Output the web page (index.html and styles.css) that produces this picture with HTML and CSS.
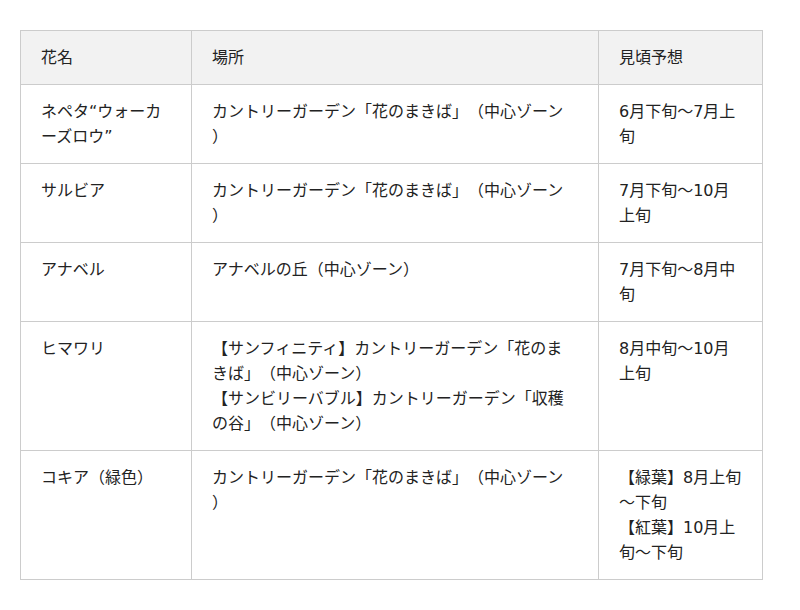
FILE: index.html
```html
<!DOCTYPE html>
<html lang="ja">
<head>
<meta charset="utf-8">
<link rel="stylesheet" href="styles.css">
</head>
<body>
<table class="bloom">
  <colgroup>
    <col class="c-name">
    <col class="c-place">
    <col class="c-season">
  </colgroup>
  <thead>
    <tr><th>花名</th><th>場所</th><th>見頃予想</th></tr>
  </thead>
  <tbody>
    <tr><td>ネペタ“ウォーカーズロウ”</td><td>カントリーガーデン「花のまきば」（中心ゾーン）</td><td>6月下旬～7月上旬</td></tr>
    <tr><td>サルビア</td><td>カントリーガーデン「花のまきば」（中心ゾーン）</td><td>7月下旬～10月上旬</td></tr>
    <tr><td>アナベル</td><td>アナベルの丘（中心ゾーン）</td><td>7月下旬～8月中旬</td></tr>
    <tr><td>ヒマワリ</td><td>【サンフィニティ】カントリーガーデン「花のまきば」（中心ゾーン）<br>【サンビリーバブル】カントリーガーデン「収穫の谷」（中心ゾーン）</td><td>8月中旬～10月上旬</td></tr>
    <tr><td>コキア（緑色）</td><td>カントリーガーデン「花のまきば」（中心ゾーン）</td><td>【緑葉】8月上旬～下旬<br>【紅葉】10月上旬～下旬</td></tr>
  </tbody>
</table>
</body>
</html>
```
FILE: styles.css
```css
html, body {
  margin: 0;
  padding: 0;
  background: #ffffff;
}
body {
  padding: 30px 20px;
  font-family: "DejaVu Sans", "Noto Sans CJK JP", sans-serif;
  font-size: 16px;
  line-height: 25px;
  color: #222222;
  text-spacing-trim: space-all;
}
.bloom {
  border-collapse: collapse;
  table-layout: fixed;
  width: 742px;
}
.c-name { width: 171px; }
.c-place { width: 407px; }
.c-season { width: 164px; }
.bloom th,
.bloom td {
  border: 1px solid #cccccc;
  padding: 14px 20px;
  text-align: left;
  vertical-align: top;
  font-weight: normal;
  line-break: anywhere;
  text-spacing-trim: space-all;
}
.bloom th {
  background: #f2f2f2;
}
```
